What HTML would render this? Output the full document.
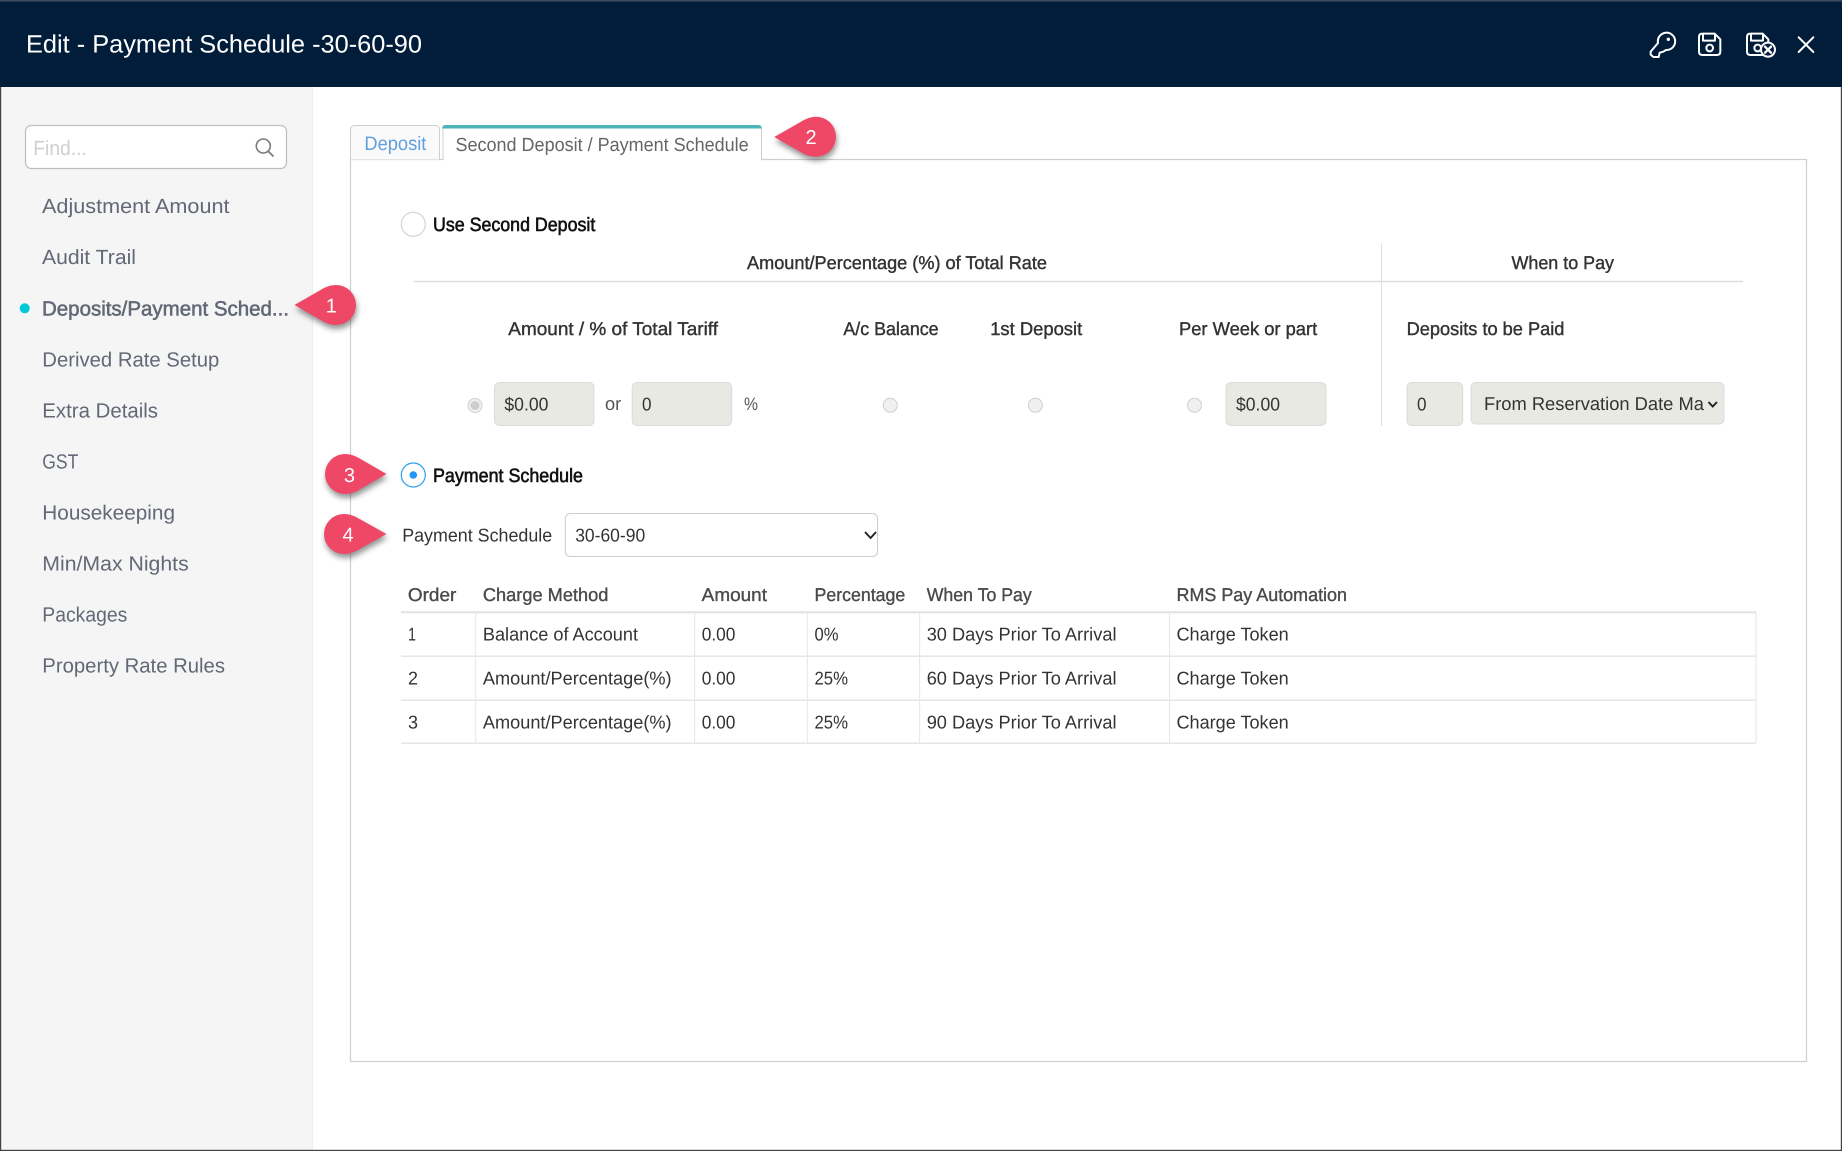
<!DOCTYPE html>
<html lang="en">
<head>
<meta charset="utf-8">
<title>Edit - Payment Schedule -30-60-90</title>
<style>
html,body{margin:0;padding:0;background:#fff;width:1842px;height:1151px;overflow:hidden}
svg{display:block}
text{font-family:"Liberation Sans",sans-serif;text-rendering:geometricPrecision}
.nav{font-size:20.5px;fill:#626876}
.t{font-size:18.5px;fill:#333}
.s{font-size:18.5px;fill:#333;stroke:#333;stroke-width:.4px}
.b{font-size:19.3px;fill:#111;stroke:#111;stroke-width:.6px}
.h{font-size:18.5px;fill:#4a4a4a;stroke:#4a4a4a;stroke-width:.35px}
.n{font-size:20px;fill:#fff;text-anchor:middle}
.box{fill:#e9e9e3;stroke:#dcdcd6;stroke-width:1}
.rd{fill:#f0f0f0;stroke:#cfcfcf;stroke-width:1}
.ln{stroke:#dedede;stroke-width:1.5}
.tl{stroke:#e6e6e6;stroke-width:1.5}
.ic{fill:none;stroke:#fff;stroke-width:6;stroke-linejoin:round;stroke-linecap:round}
.cb{fill:#ee4866;filter:drop-shadow(1px 4px 3px rgba(0,0,0,.42))}
</style>
</head>
<body>
<svg width="1842" height="1151" viewBox="0 0 1842 1151" xmlns="http://www.w3.org/2000/svg">
<defs><clipPath id="c1"><rect x="1480" y="384" width="224" height="40"/></clipPath></defs>
<rect width="1842" height="1151" fill="#fff"/>

<!-- header -->
<rect x="0" y="0" width="1842" height="87" fill="#011d3a"/>
<rect x="0" y="0" width="1842" height="1.5" fill="#3c4b5c"/>
<text x="26" y="52.7" font-size="25" fill="#fff" textLength="396" lengthAdjust="spacingAndGlyphs">Edit - Payment Schedule -30-60-90</text>

<!-- header icons -->
<g transform="translate(1600,0) scale(.33333)">
  <path class="ic" d="M174 129 A26 26 0 1 1 198 150 L190 155 L179 158 L176 171 L160 171 L152 164 L152 155 Z"/>
  <circle cx="205" cy="118" r="5" fill="#fff"/>
  <path class="ic" d="M307 101 H344 L361 118 V155 Q361 165 351 165 H307 Q297 165 297 155 V111 Q297 101 307 101 Z"/>
  <path class="ic" d="M309 102 V122 H345 V104"/>
  <circle class="ic" cx="329" cy="144" r="10"/>
  <path class="ic" d="M451 101 H488 L505 118 V155 Q505 165 495 165 H451 Q441 165 441 155 V111 Q441 101 451 101 Z"/>
  <path class="ic" d="M453 102 V122 H489 V104"/>
  <circle class="ic" cx="473" cy="144" r="10"/>
  <circle cx="504" cy="149" r="21" fill="#011d3a" stroke="#fff" stroke-width="6"/>
  <path class="ic" style="stroke-width:7" d="M495 140 L513 158 M513 140 L495 158"/>
  <path class="ic" d="M596 112 L640 156 M640 112 L596 156"/>
</g>

<!-- sidebar -->
<rect x="0" y="87" width="312.5" height="1064" fill="#f5f5f5"/>
<rect x="312" y="87" width="1" height="1064" fill="#eeeeee"/>
<rect x="25.5" y="125.5" width="261" height="43" rx="6" fill="#fff" stroke="#bdbdbd" stroke-width="1.2"/>
<text x="33.3" y="155" font-size="20.5" fill="#cfcfcf" textLength="53.5" lengthAdjust="spacingAndGlyphs">Find...</text>
<circle cx="263.3" cy="146" r="7" fill="none" stroke="#7a7a7a" stroke-width="1.6"/>
<path d="M268.5 151.5 L273.5 156.5" stroke="#7a7a7a" stroke-width="1.8" fill="none"/>

<text class="nav" x="42" y="213" textLength="187.5" lengthAdjust="spacingAndGlyphs">Adjustment Amount</text>
<text class="nav" x="42" y="264" textLength="94" lengthAdjust="spacingAndGlyphs">Audit Trail</text>
<circle cx="24.7" cy="308.3" r="5" fill="#00c8d7"/>
<text class="nav" x="42" y="315.7" textLength="247" lengthAdjust="spacingAndGlyphs" style="stroke:#626876;stroke-width:.55px">Deposits/Payment Sched...</text>
<text class="nav" x="42.3" y="366.7" textLength="177" lengthAdjust="spacingAndGlyphs">Derived Rate Setup</text>
<text class="nav" x="42.3" y="417.7" textLength="115.7" lengthAdjust="spacingAndGlyphs">Extra Details</text>
<text class="nav" x="42.3" y="468.7" textLength="36" lengthAdjust="spacingAndGlyphs" style="font-size:20.5px">GST</text>
<text class="nav" x="42.3" y="519.7" textLength="132.7" lengthAdjust="spacingAndGlyphs">Housekeeping</text>
<text class="nav" x="42.3" y="570.7" textLength="146.4" lengthAdjust="spacingAndGlyphs">Min/Max Nights</text>
<text class="nav" x="42.3" y="621.7" textLength="85" lengthAdjust="spacingAndGlyphs">Packages</text>
<text class="nav" x="42.3" y="672.7" textLength="182.7" lengthAdjust="spacingAndGlyphs">Property Rate Rules</text>

<!-- panel and tabs -->
<rect x="350.5" y="159.5" width="1456" height="902" fill="#fff" stroke="#cfcfcf" stroke-width="1.2"/>
<path d="M350.5 159.5 V130 Q350.5 125.5 355 125.5 H435 Q439.5 125.5 439.5 130 V159.5" fill="#fafafa" stroke="#cfcfcf" stroke-width="1"/>
<text x="364.4" y="150" font-size="19.5" fill="#5f9fdc" textLength="62" lengthAdjust="spacingAndGlyphs">Deposit</text>
<path d="M443 159.5 V130 Q443 125.5 447 125.5 H757 Q761.5 125.5 761.5 130 V159.5" fill="#fff" stroke="#cfcfcf" stroke-width="1"/>
<path d="M442.7 128 Q442.7 125.5 446 125.5 H758 Q761.2 125.5 761.2 128 Z" fill="#4db5b8" stroke="#4db5b8" stroke-width="1"/>
<rect x="443.5" y="158" width="317.5" height="3" fill="#fff"/>
<text x="455.5" y="151" font-size="19" fill="#666" textLength="293.2" lengthAdjust="spacingAndGlyphs">Second Deposit / Payment Schedule</text>

<!-- second deposit -->
<circle cx="413.3" cy="224.3" r="12" fill="#fff" stroke="#d4d4d4" stroke-width="1.2"/>
<text class="b" x="433" y="231" textLength="162.3" lengthAdjust="spacingAndGlyphs">Use Second Deposit</text>
<text class="s" x="747" y="269" textLength="300" lengthAdjust="spacingAndGlyphs">Amount/Percentage (%) of Total Rate</text>
<text class="s" x="1511.5" y="269" textLength="102.5" lengthAdjust="spacingAndGlyphs">When to Pay</text>
<line class="ln" x1="414" y1="281.5" x2="1743" y2="281.5"/>
<line x1="1381.6" y1="243" x2="1381.6" y2="426" stroke="#dedede" stroke-width="1"/>

<text class="s" x="508.3" y="335" textLength="209.7" lengthAdjust="spacingAndGlyphs">Amount / % of Total Tariff</text>
<text class="s" x="843.4" y="335" textLength="95.2" lengthAdjust="spacingAndGlyphs">A/c Balance</text>
<text class="s" x="990.2" y="335" textLength="92" lengthAdjust="spacingAndGlyphs">1st Deposit</text>
<text class="s" x="1179" y="335" textLength="138.2" lengthAdjust="spacingAndGlyphs">Per Week or part</text>
<text class="s" x="1406.6" y="335" textLength="157.8" lengthAdjust="spacingAndGlyphs">Deposits to be Paid</text>

<circle class="rd" cx="475" cy="405.5" r="7"/>
<circle cx="475" cy="405.5" r="4.5" fill="#cdcdcd"/>
<rect class="box" x="494.5" y="382.5" width="99.5" height="43" rx="5"/>
<text class="t" x="504.4" y="410.7" textLength="44" lengthAdjust="spacingAndGlyphs">$0.00</text>
<text x="605" y="410.2" font-size="18.5" fill="#555" textLength="16.2" lengthAdjust="spacingAndGlyphs">or</text>
<rect class="box" x="632.2" y="382.5" width="99.5" height="43" rx="5"/>
<text class="t" x="642" y="410.7" textLength="9.5" lengthAdjust="spacingAndGlyphs">0</text>
<text x="744" y="410" font-size="18" fill="#555" textLength="14" lengthAdjust="spacingAndGlyphs">%</text>
<circle class="rd" cx="890.3" cy="405.3" r="7"/>
<circle class="rd" cx="1035.4" cy="405.3" r="7"/>
<circle class="rd" cx="1194.5" cy="405.3" r="7"/>
<rect class="box" x="1226" y="382.5" width="100" height="43" rx="5"/>
<text class="t" x="1236" y="410.7" textLength="44" lengthAdjust="spacingAndGlyphs">$0.00</text>
<rect class="box" x="1407" y="382.5" width="55.7" height="43" rx="5"/>
<text class="t" x="1417" y="410.7" textLength="9.5" lengthAdjust="spacingAndGlyphs">0</text>
<rect class="box" x="1471" y="382.5" width="253" height="41.5" rx="5"/>
<text class="t" x="1484" y="410" clip-path="url(#c1)" textLength="226" lengthAdjust="spacingAndGlyphs">From Reservation Date Mar</text>
<path d="M1708.5 402 L1712.7 406.5 L1717 402" fill="none" stroke="#222" stroke-width="1.9"/>

<!-- payment schedule -->
<circle cx="413.3" cy="475" r="12" fill="#fff" stroke="#2f9fea" stroke-width="1.2"/>
<circle cx="413.3" cy="475" r="3.8" fill="#2196f3"/>
<text class="b" x="433" y="482" textLength="150" lengthAdjust="spacingAndGlyphs">Payment Schedule</text>
<text class="t" x="402.2" y="541.7" textLength="150" lengthAdjust="spacingAndGlyphs">Payment Schedule</text>
<rect x="565.3" y="513.5" width="312.2" height="43" rx="5" fill="#fff" stroke="#cfcfcf" stroke-width="1.1"/>
<text class="t" x="575.2" y="541.7" textLength="70" lengthAdjust="spacingAndGlyphs">30-60-90</text>
<path d="M865 532 L870.6 538 L876 532" fill="none" stroke="#222" stroke-width="1.9"/>

<!-- table -->
<text class="h" x="407.9" y="601.2" textLength="48.4" lengthAdjust="spacingAndGlyphs">Order</text>
<text class="h" x="482.9" y="601.2" textLength="125.5" lengthAdjust="spacingAndGlyphs">Charge Method</text>
<text class="h" x="701.7" y="601.2" textLength="65.3" lengthAdjust="spacingAndGlyphs">Amount</text>
<text class="h" x="814.5" y="601.2" textLength="90.8" lengthAdjust="spacingAndGlyphs">Percentage</text>
<text class="h" x="926.7" y="601.2" textLength="105.1" lengthAdjust="spacingAndGlyphs">When To Pay</text>
<text class="h" x="1176.5" y="601.2" textLength="170.5" lengthAdjust="spacingAndGlyphs">RMS Pay Automation</text>
<line x1="401" y1="612.3" x2="1756" y2="612.3" stroke="#e2e2e2" stroke-width="2"/>
<line class="tl" x1="401" y1="656.3" x2="1756" y2="656.3"/>
<line class="tl" x1="401" y1="700.3" x2="1756" y2="700.3"/>
<line class="tl" x1="401" y1="743.3" x2="1756" y2="743.3"/>
<g stroke="#e6e6e6" stroke-width="1">
<line x1="475.7" y1="613" x2="475.7" y2="743"/>
<line x1="694.6" y1="613" x2="694.6" y2="743"/>
<line x1="807.3" y1="613" x2="807.3" y2="743"/>
<line x1="919.6" y1="613" x2="919.6" y2="743"/>
<line x1="1169.6" y1="613" x2="1169.6" y2="743"/>
<line x1="1756" y1="613" x2="1756" y2="743"/>
</g>

<text class="t" x="408" y="640.6" textLength="8" lengthAdjust="spacingAndGlyphs">1</text>
<text class="t" x="482.9" y="640.6" textLength="155.1" lengthAdjust="spacingAndGlyphs">Balance of Account</text>
<text class="t" x="701.7" y="640.6" textLength="33.7" lengthAdjust="spacingAndGlyphs">0.00</text>
<text class="t" x="814.5" y="640.6" textLength="24" lengthAdjust="spacingAndGlyphs">0%</text>
<text class="t" x="926.7" y="640.6" textLength="189.8" lengthAdjust="spacingAndGlyphs">30 Days Prior To Arrival</text>
<text class="t" x="1176.5" y="640.6" textLength="112.2" lengthAdjust="spacingAndGlyphs">Charge Token</text>

<text class="t" x="408" y="684.6" textLength="10" lengthAdjust="spacingAndGlyphs">2</text>
<text class="t" x="482.9" y="684.6" textLength="188.7" lengthAdjust="spacingAndGlyphs">Amount/Percentage(%)</text>
<text class="t" x="701.7" y="684.6" textLength="33.7" lengthAdjust="spacingAndGlyphs">0.00</text>
<text class="t" x="814.5" y="684.6" textLength="33.5" lengthAdjust="spacingAndGlyphs">25%</text>
<text class="t" x="926.7" y="684.6" textLength="189.8" lengthAdjust="spacingAndGlyphs">60 Days Prior To Arrival</text>
<text class="t" x="1176.5" y="684.6" textLength="112.2" lengthAdjust="spacingAndGlyphs">Charge Token</text>

<text class="t" x="408" y="728.6" textLength="10" lengthAdjust="spacingAndGlyphs">3</text>
<text class="t" x="482.9" y="728.6" textLength="188.7" lengthAdjust="spacingAndGlyphs">Amount/Percentage(%)</text>
<text class="t" x="701.7" y="728.6" textLength="33.7" lengthAdjust="spacingAndGlyphs">0.00</text>
<text class="t" x="814.5" y="728.6" textLength="33.5" lengthAdjust="spacingAndGlyphs">25%</text>
<text class="t" x="926.7" y="728.6" textLength="189.8" lengthAdjust="spacingAndGlyphs">90 Days Prior To Arrival</text>
<text class="t" x="1176.5" y="728.6" textLength="112.2" lengthAdjust="spacingAndGlyphs">Charge Token</text>

<!-- callouts -->
<path class="cb" d="M294.5 305 L324 288 Q330 285 336 285 A20 20 0 0 1 336 325 Q330 325 324 322 Z"/>
<text class="n" x="331.3" y="312.3">1</text>
<path class="cb" d="M774.3 137 L804 120 Q810 116.7 816 116.7 A20 20 0 0 1 816 156.7 Q810 156.7 804 154 Z"/>
<text class="n" x="811" y="144.2">2</text>
<path class="cb" d="M386.5 474 L357 457 Q351 454 345 454 A20 20 0 0 0 345 494 Q351 494 357 491 Z"/>
<text class="n" x="349.4" y="482">3</text>
<path class="cb" d="M386.5 534 L356 517 Q350 514 344 514 A20 20 0 0 0 344 554 Q350 554 356 551 Z"/>
<text class="n" x="348" y="541.5">4</text>

<!-- window frame -->
<rect x="0" y="87" width="1.2" height="1064" fill="#444"/>
<rect x="1840.8" y="87" width="1.2" height="1064" fill="#444"/>
<rect x="0" y="1149.8" width="1842" height="1.2" fill="#444"/>
</svg>
</body>
</html>
